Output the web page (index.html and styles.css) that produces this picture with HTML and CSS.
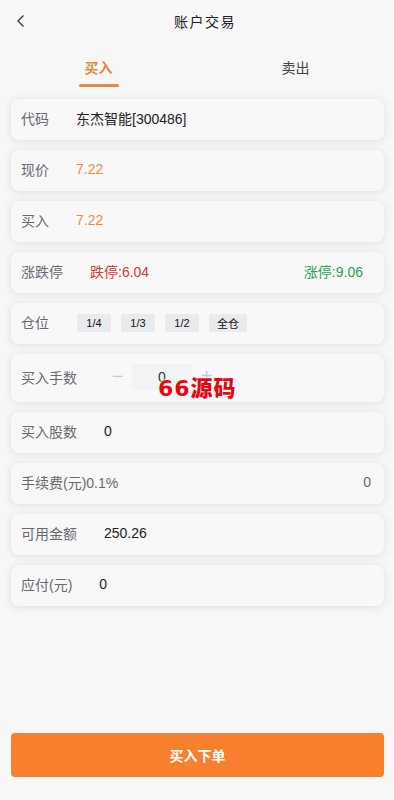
FILE: index.html
```html
<!DOCTYPE html>
<html lang="zh-CN">
<head>
<meta charset="utf-8">
<title>账户交易</title>
<link rel="stylesheet" href="styles.css">
</head>
<body>
<div class="page">
  <header class="nav">
    <span class="back">
      <svg width="10" height="14" viewBox="0 0 10 14"><path d="M7.5 1.5 L2 7 L7.5 12.5" fill="none" stroke="#333" stroke-width="1.3"/></svg>
    </span>
    <h1 class="title">账户交易</h1>
  </header>
  <div class="tabs">
    <div class="tab active">买入<span class="line"></span></div>
    <div class="tab">卖出</div>
  </div>
  <div class="list">
    <div class="card"><span class="label">代码</span><span class="val">东杰智能[300486]</span></div>
    <div class="card"><span class="label">现价</span><span class="val orange">7.22</span></div>
    <div class="card"><span class="label">买入</span><span class="val orange">7.22</span></div>
    <div class="card"><span class="label">涨跌停</span><span class="val red">跌停:6.04</span><span class="green">涨停:9.06</span></div>
    <div class="card"><span class="label">仓位</span>
      <div class="chips"><span class="chip">1/4</span><span class="chip">1/3</span><span class="chip">1/2</span><span class="chip">全仓</span></div>
    </div>
    <div class="card tall"><span class="label">买入手数</span>
      <div class="stepper"><span class="step">−</span><span class="num">0</span><span class="step">+</span></div>
      <span class="mark">66源码</span>
    </div>
    <div class="card"><span class="label">买入股数</span><span class="val">0</span></div>
    <div class="card"><span class="label">手续费(元)0.1%</span><span class="right">0</span></div>
    <div class="card"><span class="label">可用金额</span><span class="val">250.26</span></div>
    <div class="card"><span class="label">应付(元)</span><span class="val">0</span></div>
  </div>
  <div class="bottom">
    <button class="submit">买入下单</button>
  </div>
</div>
</body>
</html>
```

FILE: styles.css
```css
* { box-sizing: border-box; }
html, body { margin: 0; padding: 0; }
body {
  background: #f7f7f7;
  font-family: "Liberation Sans", "Noto Sans CJK SC", sans-serif;
  font-size: 14px;
  color: #323233;
}
.page {
  width: 394px;
  height: 800px;
  display: flex;
  flex-direction: column;
  position: relative;
}
.nav {
  height: 44px;
  display: flex;
  align-items: center;
  justify-content: center;
  position: relative;
}
.back {
  position: absolute;
  left: 16px;
  top: 14px;
  display: flex;
}
.title {
  margin: -3px 0 0 16px;
  font-size: 14px;
  font-weight: normal;
  letter-spacing: 1.5px;
  color: #222;
}
.tabs {
  display: flex;
  height: 46px;
}
.tab {
  flex: 1;
  text-align: center;
  position: relative;
  padding-top: 13px;
  color: #444;
  font-size: 14px;
}
.tab.active { color: #e8873e; font-weight: bold; }
.line {
  position: absolute;
  left: 50%;
  margin-left: -20px;
  top: 40px;
  width: 40px;
  height: 3px;
  border-radius: 2px;
  background: #e08a4b;
}
.list {
  padding: 9px 10px 0 11px;
  display: flex;
  flex-direction: column;
  gap: 10px;
}
.card {
  height: 41px;
  background: #f8f8f8;
  border-radius: 8px;
  box-shadow: 0 1px 8px rgba(0, 0, 0, 0.1);
  display: flex;
  align-items: center;
  padding: 0 13px 3px 10px;
  position: relative;
}
.card.tall { height: 48px; }
.label { color: #666a70; margin-right: 27px; }
.val { color: #222; }
.orange { color: #ef8a3e; }
.red { color: #d23a3a; }
.green { color: #2f9c5a; margin-left: auto; margin-right: 8px; }
.right { margin-left: auto; color: #666; }
.chips { display: flex; gap: 10px; margin-left: 1px; margin-top: 2px; }
.chip {
  height: 18px;
  min-width: 34px;
  padding: 0 8px;
  background: #e9eaee;
  border-radius: 2px;
  font-size: 11px;
  color: #111;
  display: flex;
  align-items: center;
  justify-content: center;
}
.stepper {
  display: flex;
  height: 26px;
  margin-left: -1px;
}
.step {
  width: 29px;
  display: flex;
  align-items: center;
  justify-content: center;
  color: #c8c9cc;
  font-size: 20px;
  background: #f7f8fa;
}
.num {
  width: 60px;
  background: #f2f3f5;
  display: flex;
  align-items: center;
  justify-content: center;
  color: #333;
}
.mark {
  position: absolute;
  left: 147px;
  top: 23px;
  font-family: "DejaVu Sans", "Noto Sans CJK SC", sans-serif;
  font-size: 22px;
  line-height: 24px;
  letter-spacing: 1px;
  font-weight: 900;
  color: #e8070f;
  text-shadow: 0 0 2px #fff, 0 0 2px #fff, 0 0 3px #fff;
  white-space: nowrap;
}
.bottom {
  margin-top: auto;
  padding: 0 10px 23px 11px;
}
.submit {
  width: 100%;
  height: 44px;
  border: none;
  border-radius: 4px;
  background: #f77f2d;
  color: #fff;
  font-family: "Liberation Sans", "Noto Sans CJK SC", sans-serif;
  font-size: 14px;
  font-weight: bold;
}
```
